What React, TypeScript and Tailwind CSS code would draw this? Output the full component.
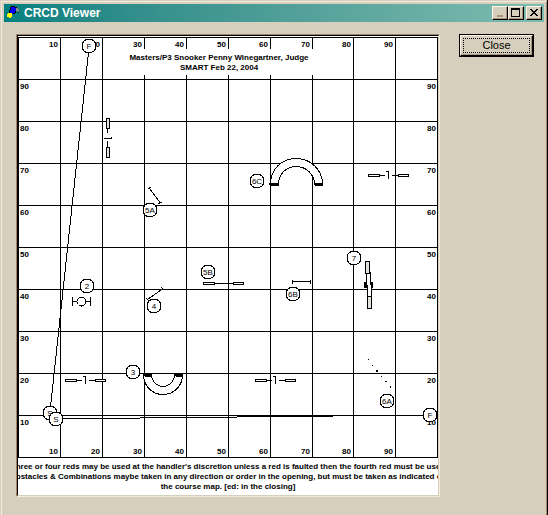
const COLUMNS = [60, 102, 144, 186, 228, 270, 312, 353, 395];
const ROWS = [79, 121, 163, 205, 247, 289, 331, 373, 415];

type MarkerData = { x: number; y: number; label: string };

const MARKERS: MarkerData[] = [
  { x: 89, y: 46, label: "F" },
  { x: 257, y: 181, label: "6C" },
  { x: 150, y: 210, label: "5A" },
  { x: 87, y: 286, label: "2" },
  { x: 154, y: 306, label: "4" },
  { x: 208, y: 272, label: "5B" },
  { x: 293, y: 294, label: "6B" },
  { x: 354, y: 258, label: "7" },
  { x: 133, y: 372, label: "3" },
  { x: 50, y: 413, label: "S" },
  { x: 56, y: 419, label: "S" },
  { x: 387, y: 401, label: "6A" },
  { x: 430, y: 415, label: "F" },
];

function Marker({ x, y, label }: MarkerData) {
  return (
    <g>
      <circle cx={x} cy={y} r="7" fill="white" stroke="black" shapeRendering="crispEdges" />
      <text x={x} y={y + 3} textAnchor="middle">
        {label}
      </text>
    </g>
  );
}

function Jump({ x, y }: { x: number; y: number }) {
  return (
    <g fill="white" stroke="black" shapeRendering="crispEdges">
      <path d={`M${x - 10} ${y}.5h7M${x + 4} ${y}.5h7`} />
      <path d={`M${x - 20}.5 ${y - 1}.5h11v2h-11zM${x + 10}.5 ${y - 1}.5h10v2h-10z`} />
      <path d={`M${x - 2} ${y - 4}.5h2.5V${y + 4}`} fill="none" />
    </g>
  );
}

function CourseMap() {
  return (
    <svg
      viewBox="18 36 420 422"
      className="block w-full font-['Liberation_Sans',Arial,sans-serif] text-[8px] font-bold"
      role="img"
      aria-label="Course map"
    >
      <g stroke="black" fill="none" shapeRendering="crispEdges">
        <rect x="18.5" y="37.5" width="419" height="420" />
        {COLUMNS.map((x) => (
          <path key={x} d={`M${x}.5 37V458`} />
        ))}
        {ROWS.map((y) => (
          <path key={y} d={`M18 ${y}.5H438`} />
        ))}
      </g>
      <rect x="122" y="49" width="220" height="26" fill="white" />
      <text x="219" y="60" textAnchor="middle">Masters/P3 Snooker Penny Winegartner, Judge</text>
      <text x="219" y="70" textAnchor="middle">SMART Feb 22, 2004</text>

      {COLUMNS.map((x, i) => (
        <g key={x} textAnchor="end">
          <text x={x - 2} y="47">{(i + 1) * 10}</text>
          <text x={x - 2} y="454">{(i + 1) * 10}</text>
        </g>
      ))}
      {ROWS.map((y, i) => (
        <g key={y}>
          <text x="20" y={y + 10}>{90 - i * 10}</text>
          <text x="436" y={y + 10} textAnchor="end">{90 - i * 10}</text>
        </g>
      ))}

      <g stroke="black" fill="none" shapeRendering="crispEdges">
        <path d="M88.5 52.5 50.5 407" />
        <path d="M62 418.5H140M140 417.5H237M237 416.5H333" />
      </g>

      <Jump x={388} y={175} />
      <Jump x={85} y={380} />
      <Jump x={275} y={380} />

      <g stroke="black" fill="white" shapeRendering="crispEdges">
        <path d="M107.5 128V133M107.5 141V147" />
        <path d="M106.5 118.5h3v10h-3zM106.5 147.5h3v10h-3z" fill="#e2e2dc" />
        <path d="M104 138.5h7.5v-2" fill="none" />
        <path d="M270.5 184.5C270.5 169 282 158.5 296 158.5C310 158.5 322.5 169 322.5 184.5H314.5C314.5 174 306 166.500 296 166.500C286 166.500 278.500 174 278.500 184.500Z" />
        <path d="M269 183.500h9v1h-8M314 183.500h8v1h-7" strokeWidth="2" />
        <path d="M143.500 374.500C143.500 386 152 394.500 163 394.500C174 394.500 182.500 386 182.500 374.500H174.500C174.500 381 169 386.500 163 386.500C157 386.500 151.500 381 151.500 374.500Z" />
        <path d="M144 374.500h7v1h-6M175 374.500h7v1h-6" strokeWidth="2" />
        <path d="M203.500 282.500h11v2h-11zM233.500 282.500h10v2h-10z" />
        <path d="M214.500 283.500h19M292.500 281.500h18M292.500 280v4M310.500 280v4M72.500 297v9M90.500 297v9M72.500 301.500h5M85.500 301.500h5" />
        <circle cx="81.500" cy="301.500" r="4.500" />
        <path d="M149.500 188.500 160.500 203M148 189l3-2M158.500 204l3-2M147.500 299.500 162.500 289M146.500 298l2 3M161.500 287l2 3.500" />
      </g>
      <g stroke="black" fill="white" shapeRendering="crispEdges">
        <path d="M364.500 282.500h2v5h-2zM371.500 282.500h1v5h-1z" fill="black" />
        <path d="M366.500 272.500h4l1 25h-4z" />
        <path d="M365.500 261.500h4v12h-4zM367.500 296.500h4v12h-4z" fill="#e2e2dc" />
      </g>
      <path
        d="M368 359h1v1h-1zM372 365h1v1h-1zM376 370h2v2h-2zM381 376h1v1h-1zM385 381h2v1h-2zM390 386h1v2h-1z"
        shapeRendering="crispEdges"
      />

      <g className="font-normal">
        {MARKERS.map((marker) => (
          <Marker key={`${marker.label}-${marker.x}`} {...marker} />
        ))}
      </g>
    </svg>
  );
}

const CAPTION_BUTTON =
  "flex h-[14px] w-4 items-center justify-center border border-t-[#fff8e8] border-l-[#fff8e8] border-r-black border-b-black bg-[#d6cfbd] shadow-[inset_-1px_-1px_0_#a89478]";

export default function App() {
  return (
    <div className="flex min-h-screen flex-col border-r border-b border-black bg-[#d6cfbd] pt-px pl-px font-['Liberation_Sans',Arial,sans-serif]">
      <div className="flex flex-1 flex-col border border-t-[#f3ecdc] border-l-[#f3ecdc] border-r-[#a08468] border-b-[#a08468] p-0.5">
        <header className="flex h-[18px] items-center bg-linear-to-r from-[#008080] to-[#7ebcaf] px-0.5">
          <svg viewBox="0 0 14 14" className="mr-1 h-3.5 w-3.5" shapeRendering="crispEdges" aria-hidden="true">
            <path d="M5 1h4v1h1v3H9v2H7v1H4V4h1z" fill="#0000ff" />
            <path d="M10 2h2v1h1v3h-1V5h-2z" fill="#8c8c8c" />
            <path d="M5 0h4v1H5zM4 1h1v3H4zM3 4h1v3H3zM9 5h1v2H9zM7 7h2v1H7zM12 6h1v1h-1zM9 1h2v1H9z" />
            <path d="M2 7h4v4H5v1H3v-1H1V8h1z" fill="#ffff00" />
          </svg>
          <h1 className="text-[12px] leading-[18px] font-bold text-white">CRCD Viewer</h1>
          <div className="ml-auto flex">
            <button type="button" aria-label="Minimize" className={CAPTION_BUTTON}>
              <svg viewBox="0 0 10 10" className="h-2.5 w-2.5" shapeRendering="crispEdges">
                <path d="M2 7h6v2H2z" fill="#a89478" />
              </svg>
            </button>
            <button type="button" aria-label="Maximize" className={CAPTION_BUTTON}>
              <svg viewBox="0 0 10 10" className="h-2.5 w-2.5" shapeRendering="crispEdges">
                <path d="M0 0h9v9H0zM1 2v6h7V2z" fillRule="evenodd" />
              </svg>
            </button>
            <button type="button" aria-label="Close window" className={`${CAPTION_BUTTON} ml-0.5`}>
              <svg viewBox="0 0 10 10" className="h-2.5 w-2.5" shapeRendering="crispEdges">
                <path d="M1 1h2v1h1v1h2V2h1V1h2v1H8v1H7v1H6v1h1v1h1v1h1v1H7V7H6V6H4v1H3v1H1V7h1V6h1V5h1V4H3V3H2V2H1z" />
              </svg>
            </button>
          </div>
        </header>

        <main className="flex items-start gap-[19px] pt-3 pr-2.5 pb-4 pl-3">
          <section className="min-w-0 flex-1 border border-t-[#a08468] border-l-[#a08468] border-r-[#f3ecdc] border-b-[#f3ecdc]">
            <div className="overflow-hidden border border-t-black border-l-black border-r-[#d6cfbd] border-b-[#d6cfbd] bg-white">
              <CourseMap />
              <div className="flex flex-col items-center pt-1 pb-[3px] text-[8px] leading-[10px] font-bold whitespace-nowrap">
                <p>Three or four reds may be used at the handler&apos;s discretion unless a red is faulted then the fourth red must be used</p>
                <p>Obstacles &amp; Combinations maybe taken in any direction or order in the opening, but must be taken as indicated on</p>
                <p>the course map. [ed: in the closing]</p>
              </div>
            </div>
          </section>
          <button
            type="button"
            className="h-[23px] w-[75px] shrink-0 border border-black p-0 text-[11px] leading-[13px]"
          >
            <span className="flex h-full items-center justify-center border border-t-[#fff8e8] border-l-[#fff8e8] border-r-black border-b-black p-0.5 shadow-[inset_-1px_-1px_0_#a89478]">
              <span className="w-full border border-dotted border-black">Close</span>
            </span>
          </button>
        </main>
      </div>
    </div>
  );
}
